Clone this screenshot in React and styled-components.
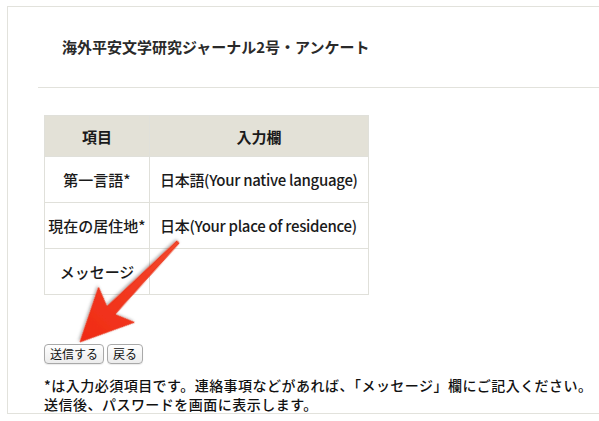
import React from 'react'
import styled, { createGlobalStyle } from 'styled-components'

const GlobalStyle = createGlobalStyle`
  html, body {
    margin: 0;
    padding: 0;
    background: #fff;
    overflow: hidden;
  }
  body {
    font-family: "Noto Sans CJK JP", "Liberation Sans", sans-serif;
    color: #222;
  }
`

const rows = [
  { label: '第一言語*', value: '日本語(Your native language)' },
  { label: '現在の居住地*', value: '日本(Your place of residence)' },
  { label: 'メッセージ', value: '' },
]

const Arrow = () => {
  // tail and tip in page coordinates
  const tail = [178, 242]
  const tip = [80, 342]
  const dx = tip[0] - tail[0]
  const dy = tip[1] - tail[1]
  const len = Math.sqrt(dx * dx + dy * dy)
  const angle = (Math.atan2(dy, dx) * 180) / Math.PI
  const pts = [
    [0, -1.5],
    [len - 44, -5.5],
    [len - 52, -25],
    [len, 0],
    [len - 52, 25],
    [len - 44, 5.5],
    [0, 1.5],
  ].map(p => p.join(',')).join(' ')

  return (
    <ArrowSvg width="599" height="421" viewBox="0 0 599 421">
      <defs>
        <filter id="shadow" x="-20%" y="-20%" width="140%" height="140%">
          <feDropShadow dx="0" dy="1.5" stdDeviation="1.5" floodColor="#000" floodOpacity="0.35" />
        </filter>
        <linearGradient id="red" x1="0" y1="0" x2="1" y2="0">
          <stop offset="0" stopColor="#f4482c" />
          <stop offset="1" stopColor="#f02a14" />
        </linearGradient>
      </defs>
      <g transform={`translate(${tail[0]} ${tail[1]}) rotate(${angle})`} filter="url(#shadow)">
        <polygon points={pts} fill="url(#red)" stroke="#e8280f" strokeWidth="0.8" strokeLinejoin="round" />
      </g>
    </ArrowSvg>
  )
}

const App = () => {
  return (
    <>
      <GlobalStyle />
      <Panel>
        <Title>海外平安文学研究ジャーナル2号・アンケート</Title>
        <Rule />
        <Body>
          <FormTable>
            <thead>
              <tr>
                <HeadCell>項目</HeadCell>
                <HeadCell>入力欄</HeadCell>
              </tr>
            </thead>
            <tbody>
              {rows.map(r => (
                <tr key={r.label}>
                  <LabelCell>{r.label}</LabelCell>
                  <ValueCell>{r.value}</ValueCell>
                </tr>
              ))}
            </tbody>
          </FormTable>
          <Buttons>
            <Button>送信する</Button>
            <Button>戻る</Button>
          </Buttons>
          <Note>
            *は入力必須項目です。連絡事項などがあれば、「メッセージ」欄にご記入ください。<br />
            送信後、パスワードを画面に表示します。
          </Note>
        </Body>
      </Panel>
      <Arrow />
    </>
  )
}

const Panel = styled.div`
  box-sizing: border-box;
  margin: 6px 0 0 7px;
  width: 600px;
  height: 408px;
  border-top: 1px solid #e2e2dc;
  border-left: 1px solid #e2e2dc;
  border-bottom: 1px solid #e2e2dc;
  padding: 30px 0 0 30px;
`

const Title = styled.h1`
  margin: 0 0 30px 24px;
  font-size: 15px;
  line-height: 20px;
  font-weight: bold;
  color: #2a2a2a;
`

const Rule = styled.div`
  height: 1px;
  background: #e2e2dc;
`

const Body = styled.div`
  padding: 27px 0 0 6px;
`

const FormTable = styled.table`
  border-collapse: collapse;
  width: 325px;
  font-size: 15px;
  font-weight: 500;
  color: #1a1a1a;
  border: 1px solid #e0e0da;
`

const HeadCell = styled.th`
  height: 40px;
  padding: 0;
  background: #e3e1d7;
  font-weight: bold;
  text-align: center;
  border: 1px solid #e0e0da;
  &:first-child {
    width: 104px;
  }
`

const LabelCell = styled.td`
  height: 45px;
  padding: 0;
  text-align: center;
  white-space: nowrap;
  border: 1px solid #e0e0da;
`

const ValueCell = styled.td`
  height: 45px;
  padding: 0 0 0 10px;
  text-align: left;
  white-space: nowrap;
  letter-spacing: -0.3px;
  border: 1px solid #e0e0da;
`

const Buttons = styled.div`
  display: flex;
  gap: 3px;
  margin-top: 49px;
`

const Button = styled.button`
  box-sizing: border-box;
  height: 20px;
  padding: 0 5px;
  font-family: "Noto Sans CJK JP", sans-serif;
  font-size: 12px;
  line-height: 18px;
  color: #111;
  background: linear-gradient(#ffffff, #ececec);
  border: 1px solid #a9a9a9;
  border-radius: 4px;
  box-shadow: 0 1px 1px rgba(0, 0, 0, 0.08);
`

const Note = styled.p`
  margin: 12px 0 0;
  font-size: 14px;
  font-weight: 500;
  line-height: 19px;
  letter-spacing: 0.48px;
  color: #111;
  white-space: nowrap;
`

const ArrowSvg = styled.svg`
  position: absolute;
  left: 0;
  top: 0;
  pointer-events: none;
`

export default App
